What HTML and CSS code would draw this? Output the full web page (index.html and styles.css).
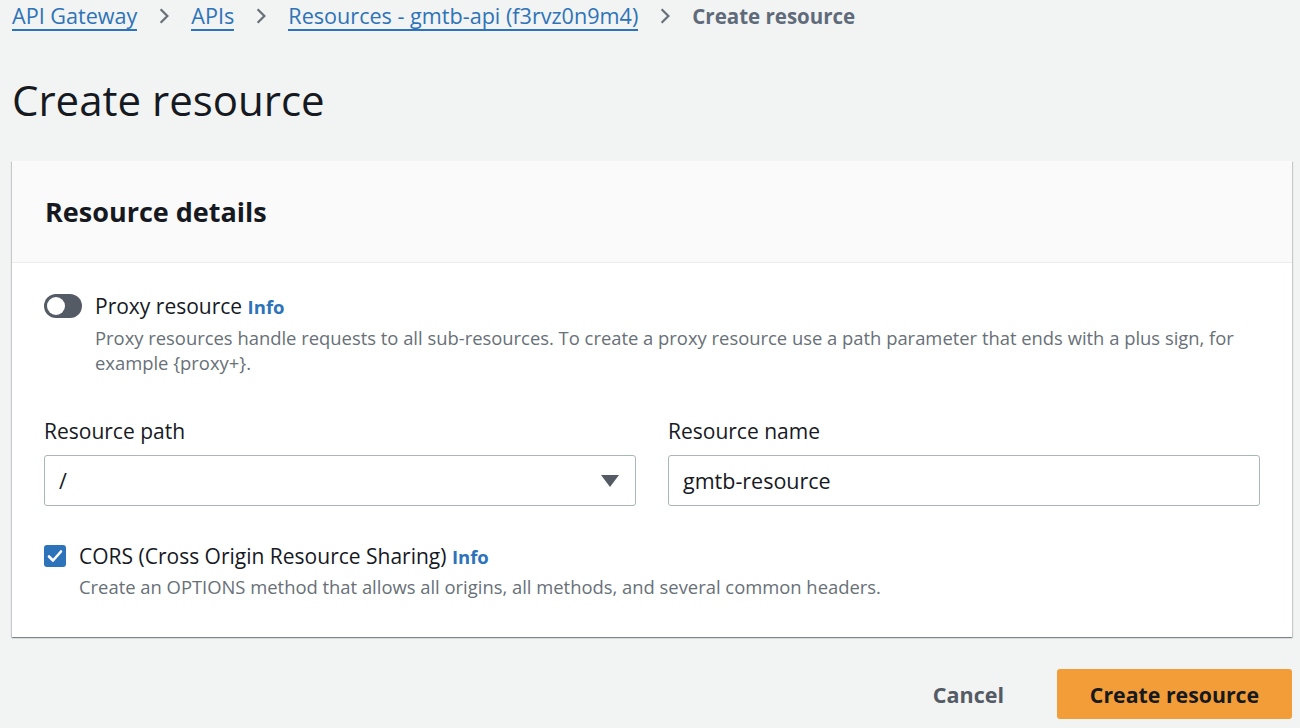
FILE: index.html
```html
<!DOCTYPE html>
<html lang="en">
<head>
<meta charset="utf-8">
<title>Create resource</title>
<link rel="stylesheet" href="styles.css">
</head>
<body>
<nav class="breadcrumbs">
  <a class="crumb" href="#">API Gateway</a>
  <svg class="chev" viewBox="0 0 16 16" width="18" height="18"><path d="M5 2l6 6-6 6" fill="none" stroke="currentColor" stroke-width="2"/></svg>
  <a class="crumb" href="#">APIs</a>
  <svg class="chev" viewBox="0 0 16 16" width="18" height="18"><path d="M5 2l6 6-6 6" fill="none" stroke="currentColor" stroke-width="2"/></svg>
  <a class="crumb" href="#">Resources - gmtb-api (f3rvz0n9m4)</a>
  <svg class="chev" viewBox="0 0 16 16" width="18" height="18"><path d="M5 2l6 6-6 6" fill="none" stroke="currentColor" stroke-width="2"/></svg>
  <span class="crumb-current">Create resource</span>
</nav>

<h1 class="page-title">Create resource</h1>

<section class="card">
  <header class="card-header">
    <h2 class="card-title">Resource details</h2>
  </header>
  <div class="card-body">
    <div class="option">
      <span class="toggle"><span class="knob"></span></span>
      <div class="option-text">
        <div class="option-label">Proxy resource <a class="info" href="#">Info</a></div>
        <div class="option-desc">Proxy resources handle requests to all sub-resources. To create a proxy resource use a path parameter that ends with a plus sign, for example {proxy+}.</div>
      </div>
    </div>

    <div class="fields">
      <div class="field">
        <label class="field-label">Resource path</label>
        <div class="control select">
          <span>/</span>
          <svg class="caret" viewBox="0 0 18 12" width="18" height="12"><path d="M0 0h18L9 12z" fill="#545b64"/></svg>
        </div>
      </div>
      <div class="field">
        <label class="field-label">Resource name</label>
        <div class="control">gmtb-resource</div>
      </div>
    </div>

    <div class="option check-option">
      <span class="checkbox"><svg viewBox="0 0 22 22" width="22" height="22"><path d="M5 11.5l4 4 8-9" fill="none" stroke="#fff" stroke-width="2.6" stroke-linecap="round" stroke-linejoin="round"/></svg></span>
      <div class="option-text">
        <div class="option-label">CORS (Cross Origin Resource Sharing) <a class="info" href="#">Info</a></div>
        <div class="option-desc">Create an OPTIONS method that allows all origins, all methods, and several common headers.</div>
      </div>
    </div>
  </div>
</section>

<div class="actions">
  <button class="btn-link" type="button">Cancel</button>
  <button class="btn-primary" type="button">Create resource</button>
</div>
</body>
</html>
```
FILE: styles.css
```css
* { box-sizing: border-box; }
html, body { margin: 0; }
body {
  background: #f2f3f3;
  font-family: "Open Sans", "Noto Sans", sans-serif;
  color: #16191f;
  padding: 0 8px 0 12px;
  font-size: 18.4px;
}
.breadcrumbs {
  display: flex;
  align-items: center;
  height: 32px;
  font-size: 21.6px;
}
.crumb {
  color: #2d73b9;
  text-decoration: none;
  border-bottom: 2px solid #2d73b9;
  line-height: 26px;
  margin-top: 1px;
}
.chev {
  color: #687078;
  margin: 0 18px;
}
.crumb-current {
  color: #5f6b7a;
  font-weight: 700;
  font-size: 20.5px;
}
.page-title {
  margin: 42px 0 0;
  font-size: 42px;
  font-weight: 400;
  line-height: 52px;
}
.card {
  margin-top: 35px;
  background: #fff;
  box-shadow: 0 1px 1px rgba(0,28,36,.3), 1px 1px 1px rgba(0,28,36,.15), -1px 1px 1px rgba(0,28,36,.15);
}
.card-header {
  background: #fafafa;
  border-bottom: 1px solid #eaeded;
  padding: 33px 33px 32px;
}
.card-title {
  margin: 0;
  font-size: 27px;
  font-weight: 700;
  line-height: 36px;
}
.card-body {
  padding: 31px 32px 38px;
}
.option {
  display: flex;
  gap: 13px;
}
.toggle {
  width: 38px;
  height: 24px;
  border-radius: 12px;
  background: #545b64;
  flex: none;
  display: flex;
  align-items: center;
  padding: 0 3px;
}
.knob {
  width: 18px;
  height: 18px;
  border-radius: 50%;
  background: #fff;
}
.option-label {
  line-height: 25px;
  font-size: 21px;
}
.info {
  color: #2d73b9;
  font-weight: 700;
  text-decoration: none;
  font-size: 18.5px;
}
.option-desc {
  color: #687078;
  line-height: 25px;
  margin-top: 6px;
}
.fields {
  display: grid;
  grid-template-columns: 1fr 1fr;
  gap: 32px;
  margin-top: 44px;
}
.field-label {
  display: block;
  line-height: 25px;
  margin-bottom: 11px;
  font-size: 21px;
}
.control {
  height: 51px;
  border: 1px solid #aab7b8;
  border-radius: 3px;
  display: flex;
  align-items: center;
  justify-content: space-between;
  padding: 0 16px 0 14px;
  font-size: 21.5px;
}
.check-option {
  margin-top: 38px;
}
.checkbox {
  width: 22px;
  height: 22px;
  border-radius: 3px;
  background: #2d73b9;
  flex: none;
  margin-top: 1px;
}
.checkbox svg { display: block; }
.check-option .option-desc { margin-top: 5px; }
.actions {
  display: flex;
  justify-content: flex-end;
  align-items: center;
  margin-top: 32px;
  gap: 28px;
}
.btn-link {
  background: none;
  border: none;
  font: inherit;
  font-size: 21.5px;
  font-weight: 700;
  color: #545b64;
  padding: 0 25px;
}
.btn-primary {
  background: #f29d38;
  border: none;
  border-radius: 3px;
  font: inherit;
  font-size: 21.3px;
  font-weight: 700;
  color: #16191f;
  height: 50px;
  width: 235px;
}
```
